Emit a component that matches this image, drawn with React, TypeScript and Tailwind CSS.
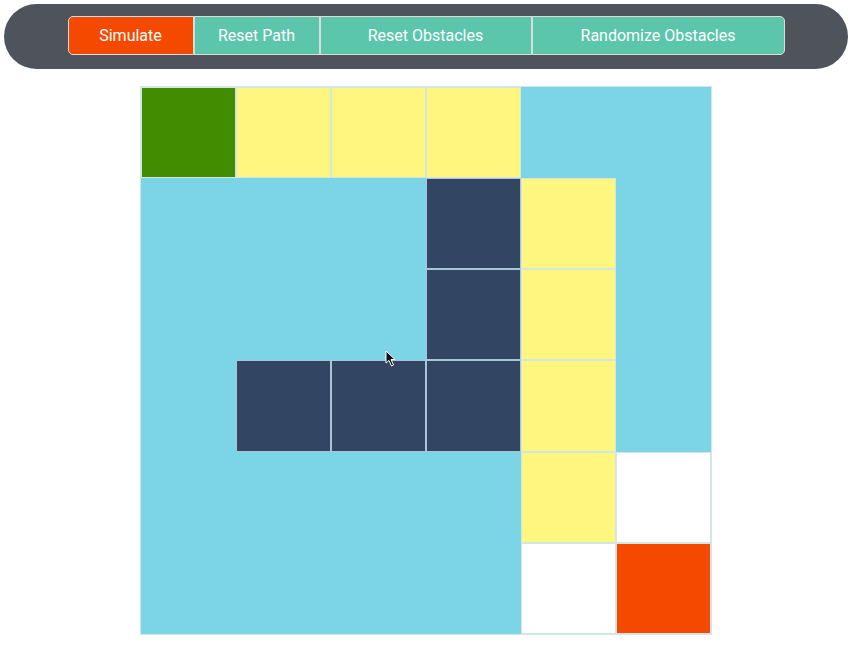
import React from 'react';

const G = 'bg-[#418c00]';
const Y = 'bg-[#fff67f]';
const B = 'bg-[#7bd5e6]';
const N = 'bg-[#324562]';
const W = 'bg-white';
const R = 'bg-[#f54900]';

const grid = [
  [G, Y, Y, Y, B, B],
  [B, B, B, N, Y, B],
  [B, B, B, N, Y, B],
  [B, N, N, N, Y, B],
  [B, B, B, B, Y, W],
  [B, B, B, B, W, R],
];

const buttons = [
  { label: 'Simulate', w: 'w-[126px]', bg: 'bg-[#f54900] rounded-l-[5px]' },
  { label: 'Reset Path', w: 'w-[126px]', bg: 'bg-[#5cc6ad]' },
  { label: 'Reset Obstacles', w: 'w-[212px]', bg: 'bg-[#5cc6ad]' },
  { label: 'Randomize Obstacles', w: 'w-[253px]', bg: 'bg-[#5cc6ad] rounded-r-[5px]' },
];

export default function App() {
  return (
    <div className="relative w-[868px] h-[654px] bg-white font-['Roboto','Liberation_Sans',sans-serif]">
      <div className="w-[852px] flex flex-col items-center">
        <div className="mt-[4px] w-[844px] h-[65px] rounded-full bg-[#4f545c] flex justify-center pt-[12px]">
          <div className="flex h-[39px]">
            {buttons.map((b) => (
              <button
                key={b.label}
                className={`${b.w} ${b.bg} h-[39px] border border-[#d8dde0] text-white text-[16px] font-normal`}
              >
                {b.label}
              </button>
            ))}
          </div>
        </div>

        <div className="mt-[17px] ml-[-1px] grid grid-cols-6 w-[572px] h-[549px] border border-[#cfe7ea]">
          {grid.flat().map((c, i) => (
            <div
              key={i}
              className={`${c} border-[0.5px] ${c === B ? 'border-[#7bd5e6]' : c === N ? 'border-[#a8c6d6]' : 'border-[#d4e6e2]'}`}
            />
          ))}
        </div>
      </div>

      {/* mouse pointer */}
      <svg className="absolute left-[385px] top-[350px]" width="11" height="17" viewBox="0 0 11 17">
        <path d="M1 1 L1 13 L4 10.5 L6.5 16 L8.5 15 L6 9.5 L10 9.5 Z" fill="#111" stroke="#fff" strokeWidth="1" strokeLinejoin="round" />
      </svg>
    </div>
  );
}
